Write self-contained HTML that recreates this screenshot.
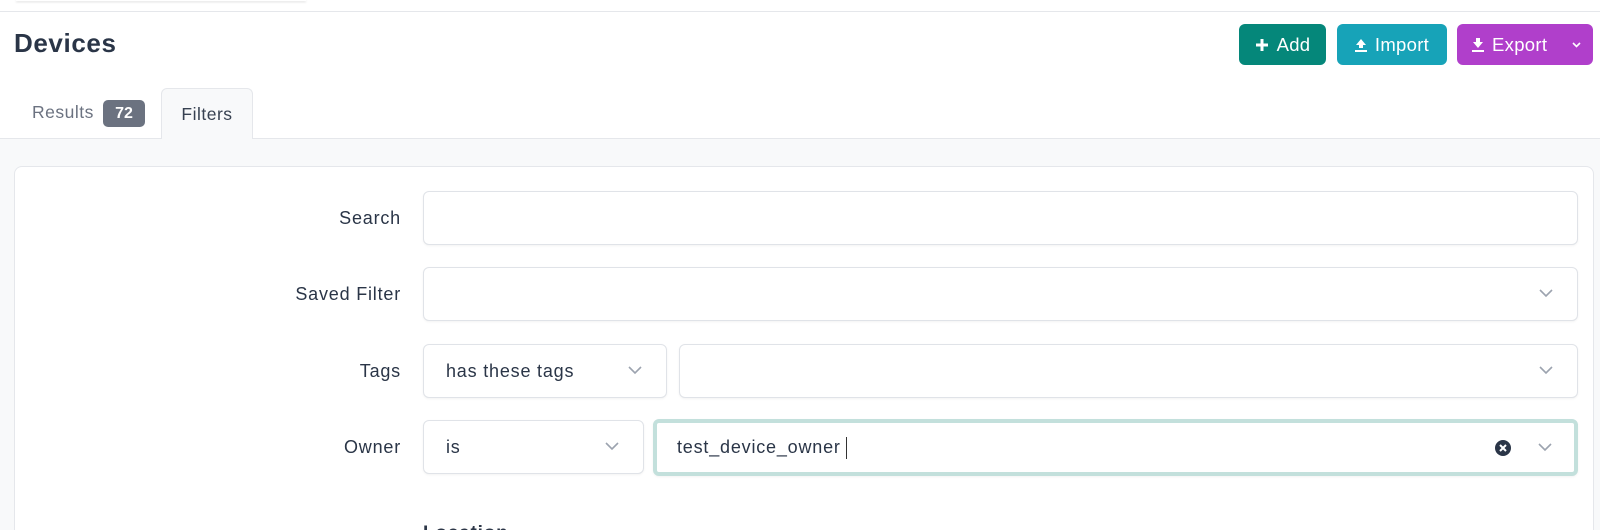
<!DOCTYPE html>
<html><head><meta charset="utf-8"><style>
*{box-sizing:border-box;margin:0;padding:0}
html,body{width:1600px;height:530px;overflow:hidden}
body{background:#fff;font-family:"Liberation Sans",sans-serif;color:#2d3748}
#w{position:absolute;left:0;top:0;width:1600px;height:530px;overflow:hidden}
.topbar{position:absolute;left:0;top:0;width:1600px;height:12px;border-bottom:1px solid #e5e7eb;background:#fff}
.topbar .pill{position:absolute;left:16px;top:0;width:290px;height:1px;box-shadow:0 1px 2px rgba(0,0,0,.2);background:#fff}
h1{position:absolute;left:14px;top:28px;font-size:26px;font-weight:bold;color:#2a3547;letter-spacing:.6px}
.btn{position:absolute;top:24px;height:41px;border-radius:6px;color:#fff;font-size:18.5px;display:flex;align-items:center;justify-content:center;gap:8px;letter-spacing:.3px}
.tabs{position:absolute;left:0;top:138px;width:1600px;border-top:1px solid #e5e7eb}
.tab1{position:absolute;left:32px;top:102px;font-size:17.5px;color:#6b7280;letter-spacing:.5px}
.badge{position:absolute;left:103px;top:100px;width:42px;height:27px;border-radius:5px;background:#6b7280;color:#fff;font-size:16px;text-align:center;line-height:27px;font-weight:bold}
.tab2{position:absolute;left:161px;top:88px;width:92px;height:51px;border:1px solid #e5e7eb;border-bottom:none;border-radius:6px 6px 0 0;background:#f8f9fa;font-size:17.5px;color:#374151;text-align:center;line-height:51px;letter-spacing:.5px}
.bg{position:absolute;left:0;top:139px;width:1600px;height:391px;background:#f8f9fa}
.card{position:absolute;left:14px;top:166px;width:1580px;height:364px;background:#fff;border:1px solid #e5e7eb;border-bottom:none;border-radius:8px 8px 0 0}
.lbl{position:absolute;right:1199px;font-size:18px;color:#2a3547;letter-spacing:.8px}
.in{position:absolute;height:54px;border:1px solid #e0e3e8;border-radius:6px;background:#fff;box-shadow:0 1px 2px rgba(0,0,0,.05);font-size:18px;color:#2a3547;line-height:52px;padding-left:22px;letter-spacing:.8px}
.chev{position:absolute;top:21px;width:14px;height:9px}
</style></head><body><div id="w">
<div class="topbar"><div class="pill"></div></div>
<h1>Devices</h1>
<div class="btn" style="left:1239px;width:87px;background:#05877a"><svg width="14" height="14" viewBox="0 0 14 14"><path d="M7 1v12M1 7h12" stroke="#fff" stroke-width="3"/></svg>Add</div>
<div class="btn" style="left:1337px;width:110px;background:#17a3b8"><svg width="12" height="14" viewBox="0 0 12 14"><path d="M6 1L1 7h3v3h4V7h3z" fill="#fff"/><rect x="0" y="12" width="12" height="2" fill="#fff"/></svg>Import</div>
<div class="btn" style="left:1457px;width:136px;background:#b03fcb;justify-content:flex-start;padding-left:15px"><svg width="12" height="14" viewBox="0 0 12 14"><path d="M6 10L1 4h3V0h4v4h3z" fill="#fff"/><rect x="0" y="12" width="12" height="2" fill="#fff"/></svg>Export<svg style="position:absolute;right:12px;top:18px" width="9" height="6" viewBox="0 0 9 6"><path d="M1 1l3.5 3.5L8 1" stroke="#fff" stroke-width="1.6" fill="none"/></svg></div>
<div class="bg"></div>
<div class="tabs"></div>
<div class="tab1">Results</div><div class="badge">72</div>
<div class="tab2">Filters</div>
<div class="card"></div>
<div class="lbl" style="top:208px">Search</div>
<div class="in" style="left:423px;top:191px;width:1155px"></div>
<div class="lbl" style="top:284px">Saved Filter</div>
<div class="in" style="left:423px;top:267px;width:1155px"><svg class="chev" style="right:24px" viewBox="0 0 14 9"><path d="M1 1l6 6 6-6" stroke="#9ca3af" stroke-width="1.6" fill="none"/></svg></div>
<div class="lbl" style="top:361px">Tags</div>
<div class="in" style="left:423px;top:344px;width:244px">has these tags<svg class="chev" style="right:24px" viewBox="0 0 14 9"><path d="M1 1l6 6 6-6" stroke="#9ca3af" stroke-width="1.6" fill="none"/></svg></div>
<div class="in" style="left:679px;top:344px;width:899px"><svg class="chev" style="right:24px" viewBox="0 0 14 9"><path d="M1 1l6 6 6-6" stroke="#9ca3af" stroke-width="1.6" fill="none"/></svg></div>
<div class="lbl" style="top:437px">Owner</div>
<div class="in" style="left:423px;top:420px;width:221px">is<svg class="chev" style="right:24px" viewBox="0 0 14 9"><path d="M1 1l6 6 6-6" stroke="#9ca3af" stroke-width="1.6" fill="none"/></svg></div>
<div class="in" style="left:653px;top:419px;width:925px;height:57px;border:4px solid #c3e0dc;padding-left:20px;line-height:49px">test_device_owner<span style="display:inline-block;width:1px;height:22px;background:#333;vertical-align:middle;margin-left:5px"></span>
<svg style="position:absolute;right:63px;top:17px" width="16" height="16" viewBox="0 0 16 16"><circle cx="8" cy="8" r="8" fill="#2a3547"/><path d="M5 5l6 6M11 5l-6 6" stroke="#fff" stroke-width="2"/></svg>
<svg class="chev" style="right:22px;top:20px" viewBox="0 0 14 9"><path d="M1 1l6 6 6-6" stroke="#9ca3af" stroke-width="1.6" fill="none"/></svg></div>
<div style="position:absolute;left:423px;top:522px;width:200px;height:8px;overflow:hidden"><div style="font-size:19px;font-weight:bold;color:#2d3748;letter-spacing:.8px;line-height:22px;margin-top:1px">Location</div></div>
</div></body></html>
